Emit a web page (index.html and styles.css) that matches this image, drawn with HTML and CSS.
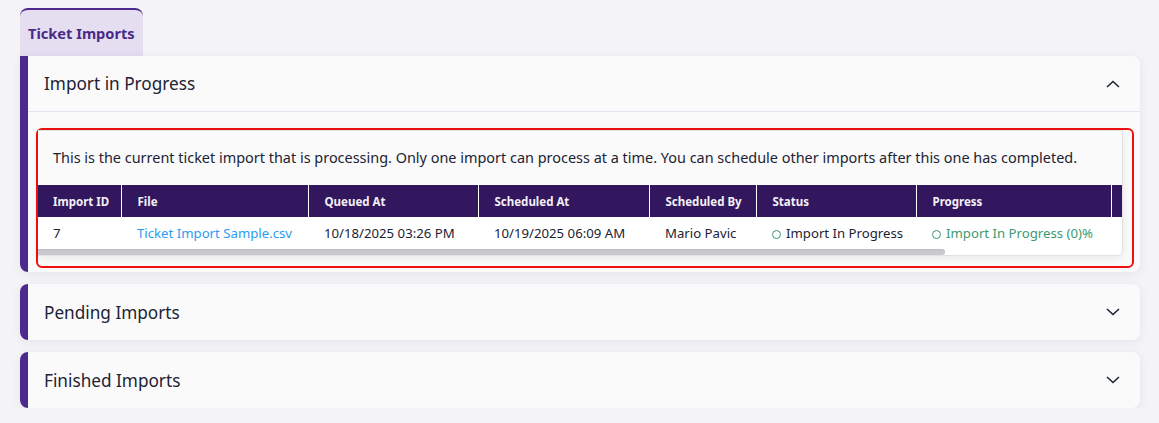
FILE: index.html
```html
<!DOCTYPE html>
<html lang="en">
<head>
  <meta charset="UTF-8" />
  <meta name="viewport" content="width=device-width, initial-scale=1" />
  <title>Ticket Imports</title>
  <link rel="stylesheet" href="styles.css">
</head>
<body>
  <div class="tabs">
    <div class="tab active">Ticket Imports</div>
  </div>

  <div class="accordion">
    <section class="panel open">
      <div class="panel-header">
        <span class="panel-title">Import in Progress</span>
        <svg class="chevron" width="14" height="8" viewBox="0 0 14 8"><path d="M1 7L7 1.5L13 7" fill="none" stroke="#1c2333" stroke-width="1.6"/></svg>
      </div>
      <div class="panel-body">
        <div class="highlight">
          <div class="import-card">
            <p class="note">This is the current ticket import that is processing. Only one import can process at a time. You can schedule other imports after this one has completed.</p>
            <div class="table-wrap">
              <table class="import-table">
                <thead>
                  <tr>
                    <th class="col-id">Import ID</th>
                    <th class="col-file">File</th>
                    <th class="col-queued">Queued At</th>
                    <th class="col-sched">Scheduled At</th>
                    <th class="col-by">Scheduled By</th>
                    <th class="col-status">Status</th>
                    <th class="col-progress">Progress</th>
                    <th class="col-extra"></th>
                  </tr>
                </thead>
                <tbody>
                  <tr>
                    <td class="col-id">7</td>
                    <td><a href="#" class="file-link">Ticket Import Sample.csv</a></td>
                    <td>10/18/2025 03:26 PM</td>
                    <td>10/19/2025 06:09 AM</td>
                    <td>Mario Pavic</td>
                    <td><span class="dot"></span>Import In Progress</td>
                    <td class="progress"><span class="dot"></span>Import In Progress (0)%</td>
                    <td></td>
                  </tr>
                </tbody>
              </table>
            </div>
            <div class="scrollbar"><div class="thumb" style="width: 83.7%"></div></div>
          </div>
        </div>
      </div>
    </section>

    <section class="panel">
      <div class="panel-header">
        <span class="panel-title">Pending Imports</span>
        <svg class="chevron" width="14" height="8" viewBox="0 0 14 8"><path d="M1 1L7 6.5L13 1" fill="none" stroke="#1c2333" stroke-width="1.6"/></svg>
      </div>
    </section>

    <section class="panel">
      <div class="panel-header">
        <span class="panel-title">Finished Imports</span>
        <svg class="chevron" width="14" height="8" viewBox="0 0 14 8"><path d="M1 1L7 6.5L13 1" fill="none" stroke="#1c2333" stroke-width="1.6"/></svg>
      </div>
    </section>
  </div>
</body>
</html>
```

FILE: styles.css
```css
body {
  margin: 0;
  padding: 8px 19px 0 20px;
  font-family: "Noto Sans", Lato, sans-serif;
  background-color: #f4f4f7;
  color: #1c2333;
}
.tabs {
  display: flex;
}
.tab {
  padding: 13px 8px 0 8px;
  height: 33px;
  font-size: 14.6px;
  font-weight: bold;
  color: #4a2a86;
  background-color: #e5ddf0;
  border-top: 2px solid #4f2a8e;
  border-radius: 8px 8px 0 0;
}
.accordion {
  display: flex;
  flex-direction: column;
  gap: 12px;
}
.panel {
  background-color: #fafafa;
  border-left: 8px solid #4f2a8e;
  border-radius: 8px;
  box-shadow: 0 2px 10px rgba(40, 40, 90, 0.07);
}
.panel.open {
  border-top-left-radius: 0;
}
.panel-header {
  display: flex;
  align-items: center;
  justify-content: space-between;
  height: 56px;
  padding: 0 20px 0 16px;
}
.panel.open .panel-header {
  height: 55px;
  border-bottom: 1px solid #e4e3ef;
}
.panel-title {
  font-size: 17.2px;
}
.panel-body {
  padding: 16px 6px 4px 8px;
}
.highlight {
  border: 2px solid #f01010;
  border-radius: 6px;
  padding: 0 9px 10px 0;
}
.import-card {
  background-color: #fafafa;
  border: 1px solid #e2e2e6;
  border-left: none;
  border-radius: 0 0 6px 0;
  box-shadow: 0 2px 8px rgba(0, 0, 0, 0.08);
  overflow: hidden;
}
.note {
  margin: 0;
  padding: 17px 15px 17px 15px;
  font-size: 14.45px;
  line-height: 20px;
}
.table-wrap {
  overflow: hidden;
  background-color: #fff;
}
.scrollbar {
  height: 6px;
  background-color: #fff;
}
.thumb {
  height: 100%;
  background-color: #c8c8cd;
  border-top: 1px solid #bdbdc3;
  box-sizing: border-box;
  border-radius: 0 3px 3px 0;
}
.import-table {
  border-collapse: collapse;
  table-layout: fixed;
  width: 1296px;
  font-size: 13.2px;
}
.import-table th {
  box-sizing: border-box;
  height: 32px;
  padding: 0 8px 0 16px;
  text-align: left;
  white-space: nowrap;
  font-size: 11.5px;
  font-weight: bold;
  color: #f2f0f6;
  background-color: #32165e;
  border-right: 1px solid #fff;
}
.import-table td {
  height: 32px;
  padding: 0 8px 0 16px;
  white-space: nowrap;
  overflow: hidden;
  background-color: #fff;
}
.import-table .col-id {
  padding-left: 15px;
}
.col-id { width: 83px; }
.col-file { width: 187px; }
.col-queued { width: 170px; }
.col-sched { width: 171px; }
.col-by { width: 107px; }
.col-status { width: 160px; }
.col-progress { width: 195px; }
.file-link {
  color: #2b9cf2;
  text-decoration: none;
}
.dot {
  display: inline-block;
  width: 7px;
  height: 7px;
  margin-right: 5px;
  border: 1.5px solid #3d9470;
  border-radius: 50%;
  vertical-align: -0.5px;
}
.progress {
  color: #3d9a70;
}
```
